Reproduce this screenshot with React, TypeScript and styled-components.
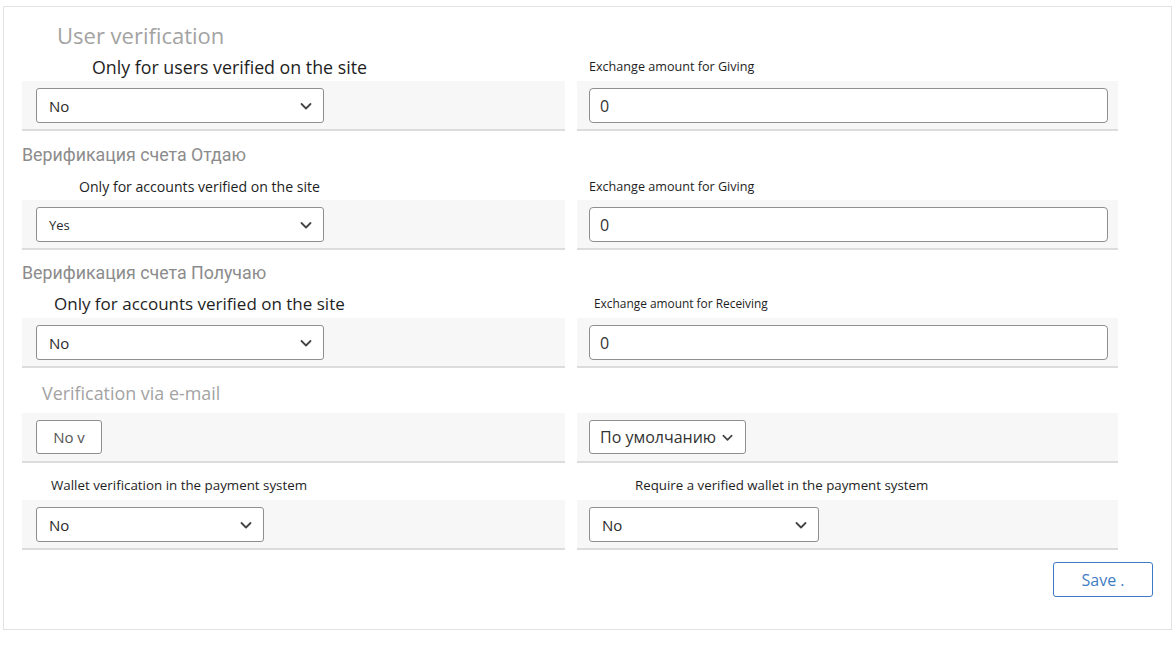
import React from "react";
import styled, { createGlobalStyle } from "styled-components";

const GlobalStyle = createGlobalStyle`
  html, body {
    margin: 0;
    padding: 0;
    background: #ffffff;
    font-family: "Open Sans", "Noto Sans", sans-serif;
    color: #222;
  }
  * { box-sizing: border-box; }
`;

type Field =
  | { kind: "select"; value: string; width: number; fontSize?: number }
  | { kind: "input"; value: string; width: number }
  | { kind: "button"; value: string; width: number }
  | { kind: "compact"; value: string; width: number };

type Cell = {
  label?: string;
  labelSize?: number;
  indent: number;
  field: Field;
};

type Section = {
  heading?: string;
  headingSize: number;
  headingFont?: string;
  headingTop: number;
  headingBottom: number;
  headingIndent: number;
  labelHeight: number;
  labelPadTop?: number;
  cells: [Cell, Cell];
};

const sections: Section[] = [
  {
    heading: "User verification",
    headingSize: 22,
    headingTop: 14,
    headingBottom: 3,
    headingIndent: 35,
    labelHeight: 29,
    cells: [
      {
        label: "Only for users verified on the site",
        labelSize: 17.8,
        indent: 70,
        field: { kind: "select", value: "No", width: 288 },
      },
      {
        label: "Exchange amount for Giving",
        labelSize: 12.6,
        indent: 12,
        field: { kind: "input", value: "0", width: 519 },
      },
    ],
  },
  {
    heading: "Верификация счета Отдаю",
    headingSize: 17.8,
    headingFont: "Roboto",
    headingTop: 13,
    headingBottom: 6,
    headingIndent: 0,
    labelHeight: 28,
    cells: [
      {
        label: "Only for accounts verified on the site",
        labelSize: 14.1,
        indent: 57,
        field: { kind: "select", value: "Yes", width: 288, fontSize: 13 },
      },
      {
        label: "Exchange amount for Giving",
        labelSize: 12.6,
        indent: 12,
        field: { kind: "input", value: "0", width: 519 },
      },
    ],
  },
  {
    heading: "Верификация счета Получаю",
    headingSize: 17.8,
    headingFont: "Roboto",
    headingTop: 12,
    headingBottom: 4,
    headingIndent: 0,
    labelHeight: 30,
    cells: [
      {
        label: "Only for accounts verified on the site",
        labelSize: 17,
        indent: 32,
        field: { kind: "select", value: "No", width: 288 },
      },
      {
        label: "Exchange amount for Receiving",
        labelSize: 11.9,
        indent: 17,
        field: { kind: "input", value: "0", width: 519 },
      },
    ],
  },
  {
    heading: "Verification via e-mail",
    headingSize: 17.9,
    headingTop: 14,
    headingBottom: 9,
    headingIndent: 20,
    labelHeight: 0,
    cells: [
      { indent: 0, field: { kind: "button", value: "No v", width: 66 } },
      { indent: 0, field: { kind: "compact", value: "По умолчанию", width: 157 } },
    ],
  },
  {
    headingSize: 0,
    headingTop: 0,
    headingBottom: 0,
    headingIndent: 0,
    labelHeight: 37,
    labelPadTop: 7,
    cells: [
      {
        label: "Wallet verification in the payment system",
        labelSize: 13.35,
        indent: 29,
        field: { kind: "select", value: "No", width: 228 },
      },
      {
        label: "Require a verified wallet in the payment system",
        labelSize: 13.3,
        indent: 58,
        field: { kind: "select", value: "No", width: 230 },
      },
    ],
  },
];

const Chevron = ({ size = 14 }: { size?: number }) => (
  <svg width={size} height={size} viewBox="0 0 14 14" fill="none">
    <path d="M2.5 5 L7 9.5 L11.5 5" stroke="#444" strokeWidth="1.8" strokeLinecap="round" strokeLinejoin="round" />
  </svg>
);

const renderField = (f: Field) => {
  switch (f.kind) {
    case "select":
      return (
        <SelectBox $width={f.width}>
          <SelectText $size={f.fontSize ?? 15}>{f.value}</SelectText>
          <Chevron />
        </SelectBox>
      );
    case "input":
      return <TextInput $width={f.width} defaultValue={f.value} readOnly />;
    case "button":
      return <SmallButton $width={f.width}>{f.value}</SmallButton>;
    case "compact":
      return (
        <CompactSelect $width={f.width}>
          {f.value}
          <Chevron size={13} />
        </CompactSelect>
      );
  }
};

const App = () => {
  return (
    <>
      <GlobalStyle />
      <Card>
        {sections.map((s, i) => (
          <div key={i}>
            {s.heading && (
              <Heading
                $size={s.headingSize}
                $font={s.headingFont}
                $top={s.headingTop}
                $bottom={s.headingBottom}
                $indent={s.headingIndent}
              >
                {s.heading}
              </Heading>
            )}
            <Grid>
              {s.cells.map((c, j) => (
                <Column key={j}>
                  {s.labelHeight > 0 && (
                    <Label
                      $height={s.labelHeight}
                      $padTop={s.labelPadTop ?? 0}
                      $size={c.labelSize ?? 13}
                      $indent={c.indent}
                    >
                      {c.label}
                    </Label>
                  )}
                  <Band $side={j === 0 ? "left" : "right"}>{renderField(c.field)}</Band>
                </Column>
              ))}
            </Grid>
          </div>
        ))}
        <Footer>
          <SaveButton>Save .</SaveButton>
        </Footer>
      </Card>
    </>
  );
};

export default App;

const Card = styled.div`
  margin: 6px 0 0 3px;
  width: 1169px;
  border: 1px solid #e2e2e2;
  padding: 0 18px 32px 18px;
  background: #fff;
`;

const Heading = styled.div<{ $size: number; $font?: string; $top: number; $bottom: number; $indent: number }>`
  font-family: ${(p) => (p.$font ? `"${p.$font}", "Open Sans", sans-serif` : `"Open Sans", sans-serif`)};
  font-size: ${(p) => p.$size}px;
  line-height: ${(p) => Math.round(p.$size * 1.25)}px;
  color: ${(p) => (p.$font ? "#8c8c8c" : "#a3a3a3")};
  padding: ${(p) => p.$top}px 0 ${(p) => p.$bottom}px ${(p) => p.$indent}px;
`;

const Grid = styled.div`
  display: grid;
  grid-template-columns: 543px 541px;
  column-gap: 12px;
`;

const Column = styled.div`
  display: flex;
  flex-direction: column;
`;

const Label = styled.div<{ $height: number; $padTop: number; $size: number; $indent: number }>`
  height: ${(p) => p.$height}px;
  padding: ${(p) => p.$padTop}px 0 0 ${(p) => p.$indent}px;
  display: flex;
  align-items: center;
  font-size: ${(p) => p.$size}px;
  color: #1e1e1e;
  white-space: nowrap;
`;

const Band = styled.div<{ $side: "left" | "right" }>`
  height: 50px;
  background: #f7f7f7;
  border-bottom: 2px solid #dcdcdc;
  padding: 7px 0 0 ${(p) => (p.$side === "left" ? 14 : 12)}px;
  display: flex;
  align-items: flex-start;
`;

const SelectBox = styled.div<{ $width: number }>`
  width: ${(p) => p.$width}px;
  height: 35px;
  background: #fff;
  border: 1px solid #8f8f8f;
  border-radius: 3px;
  display: flex;
  align-items: center;
  justify-content: space-between;
  padding: 0 10px 0 12px;
`;

const SelectText = styled.span<{ $size: number }>`
  font-size: ${(p) => p.$size}px;
  color: #2a2a2a;
`;

const TextInput = styled.input<{ $width: number }>`
  width: ${(p) => p.$width}px;
  height: 35px;
  border: 1px solid #8f8f8f;
  border-radius: 4px;
  background: #fff;
  padding: 0 10px;
  font-family: "Open Sans", sans-serif;
  font-size: 16px;
  color: #333;
  outline: none;
`;

const SmallButton = styled.div<{ $width: number }>`
  width: ${(p) => p.$width}px;
  height: 34px;
  border: 1px solid #8f8f8f;
  border-radius: 3px;
  background: #fff;
  display: flex;
  align-items: center;
  justify-content: center;
  font-size: 15px;
  color: #555;
`;

const CompactSelect = styled.div<{ $width: number }>`
  width: ${(p) => p.$width}px;
  height: 34px;
  border: 1px solid #8f8f8f;
  border-radius: 3px;
  background: #fff;
  display: flex;
  align-items: center;
  gap: 5px;
  padding: 0 10px;
  font-size: 16px;
  color: #333;
`;

const Footer = styled.div`
  display: flex;
  justify-content: flex-end;
  padding-top: 12px;
`;

const SaveButton = styled.button`
  width: 100px;
  height: 35px;
  border: 1px solid #3c7ac6;
  border-radius: 3px;
  background: #fff;
  color: #3f7dc4;
  font-family: "Open Sans", sans-serif;
  font-size: 16px;
  cursor: pointer;
`;
